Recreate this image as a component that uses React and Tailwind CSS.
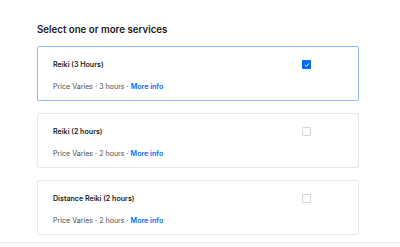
import React from "react";

const services = [
  { name: "Reiki (3 Hours)", dur: "3 hours", checked: true },
  { name: "Reiki (2 hours)", dur: "2 hours", checked: false },
  { name: "Distance Reiki (2 hours)", dur: "2 hours", checked: false },
];

function Check({ checked }) {
  if (checked) {
    return (
      <div className="w-[9px] h-[9px] rounded-[1px] bg-[#006aff] flex items-center justify-center">
        <svg width="6" height="6" viewBox="0 0 6 6" fill="none">
          <path d="M1.2 3.1 L2.5 4.3 L4.9 1.7" stroke="white" strokeWidth="1" strokeLinecap="round" strokeLinejoin="round" />
        </svg>
      </div>
    );
  }
  return <div className="w-[9px] h-[9px] rounded-[1px] border border-[#d6d6d6] bg-white" />;
}

export default function App() {
  return (
    <div className="w-[400px] h-[247px] bg-white overflow-hidden" style={{ fontFamily: "Inter, 'Liberation Sans', sans-serif" }}>
      <div className="pl-[37px] pt-[23px]">
        <h1 className="text-[9.7px] leading-[14px] font-semibold text-[#1a1a1a]">Select one or more services</h1>
        <div className="mt-[9px] w-[322px] flex flex-col gap-[12px]">
          {services.map((s) => (
            <div
              key={s.name}
              className={`rounded-[2px] border bg-white pl-[15px] pr-[47px] pt-[12.5px] pb-[8px] ${s.checked ? "border-[#8fb9ff]" : "border-[#e6e6e6]"}`}
            >
              <div className="flex items-center justify-between h-[10px]">
                <span className="text-[7.1px] leading-[10px] font-semibold text-[#1a1a1a]">{s.name}</span>
                <Check checked={s.checked} />
              </div>
              <div className="mt-[12.5px] text-[7.1px] leading-[10px] text-[#4d4d4d]">
                Price Varies · {s.dur} · <span className="font-semibold text-[#006aff]">More info</span>
              </div>
            </div>
          ))}
        </div>
      </div>
      <div className="mt-[7px] border-t border-[#ececec]" />
    </div>
  );
}
